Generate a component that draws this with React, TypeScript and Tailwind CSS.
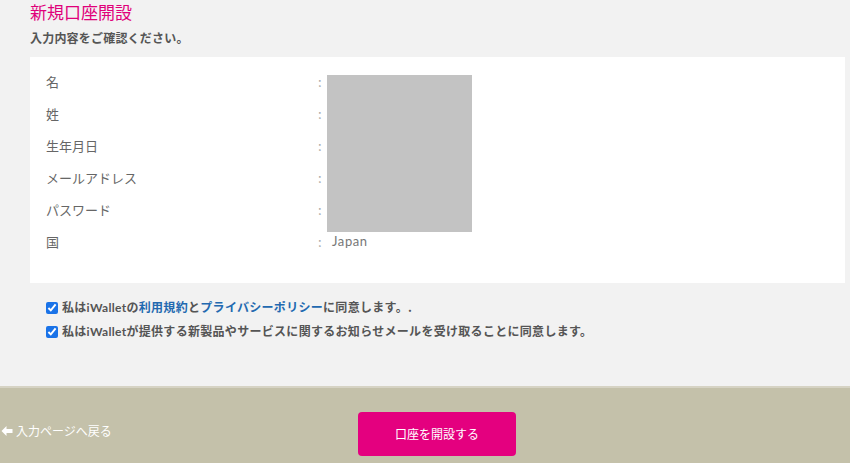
const rows = [
  { label: "名", value: "" },
  { label: "姓", value: "" },
  { label: "生年月日", value: "" },
  { label: "メールアドレス", value: "" },
  { label: "パスワード", value: "" },
  { label: "国", value: "Japan" },
];

const jp = { fontFamily: '"Noto Sans CJK JP", "Noto Sans", sans-serif' };

export default function App() {
  return (
    <div className="min-h-[463px] bg-[#f2f2f2] flex flex-col" style={jp}>
      <div className="pl-[30px] pr-[5px] pt-[1px]">
        <h1 className="text-[17px] leading-[22px] text-[#e0007a]">新規口座開設</h1>
        <p className="mt-[7px] text-[12px] leading-[16px] font-bold text-[#555] tracking-[0.2px]">入力内容をご確認ください。</p>

        {/* 確認テーブル */}
        <div className="relative mt-[11px] bg-white h-[226px] pt-[15px] pl-[16px]">
          {rows.map((r) => (
            <div key={r.label} className="flex h-[32px] text-[13px] text-[#666]">
              <span className="w-[272px]">{r.label}</span>
              <span className="w-[14px] text-[#aaa]">:</span>
              <span className="font-['Lato'] tracking-[0.6px] text-[#777]">{r.value}</span>
            </div>
          ))}
          <div className="absolute left-[297px] top-[18px] w-[145px] h-[157px] bg-[#c3c3c3]" />
        </div>

        <div className="mt-[16px] pl-[16px] flex flex-col gap-[7px] text-[12px] leading-[16px] font-bold text-[#555] tracking-[0.3px]">
          <label className="flex items-center gap-[4px]">
            <input type="checkbox" defaultChecked className="w-[12px] h-[12px] accent-[#1a73e8]" />
            <span>
              私は<span className="font-['Lato']">iWallet</span>の<span className="text-[#2269b0]">利用規約</span>と<span className="text-[#2269b0]">プライバシーポリシー</span>に同意します。.
            </span>
          </label>
          <label className="flex items-center gap-[4px]">
            <input type="checkbox" defaultChecked className="w-[12px] h-[12px] accent-[#1a73e8]" />
            <span>
              私は<span className="font-['Lato']">iWallet</span>が提供する新製品やサービスに関するお知らせメールを受け取ることに同意します。
            </span>
          </label>
        </div>
      </div>

      {/* フッター */}
      <div className="mt-auto h-[77px] bg-[#c4c1aa] border-t-[2px] border-[#d6d3c4] flex items-start">
        <a className="w-[358px] pl-[1px] pt-[34px] text-[12px] text-white flex items-center gap-[3px]">
          <svg width="12" height="12" viewBox="0 0 24 24" fill="white">
            <path d="M11 2 1 12l10 10v-6h12V8H11z" />
          </svg>
          入力ページへ戻る
        </a>
        <button className="w-[158px] h-[44px] mt-[24px] rounded-[4px] bg-[#e4007f] text-white text-[12px]">口座を開設する</button>
      </div>
    </div>
  );
}
